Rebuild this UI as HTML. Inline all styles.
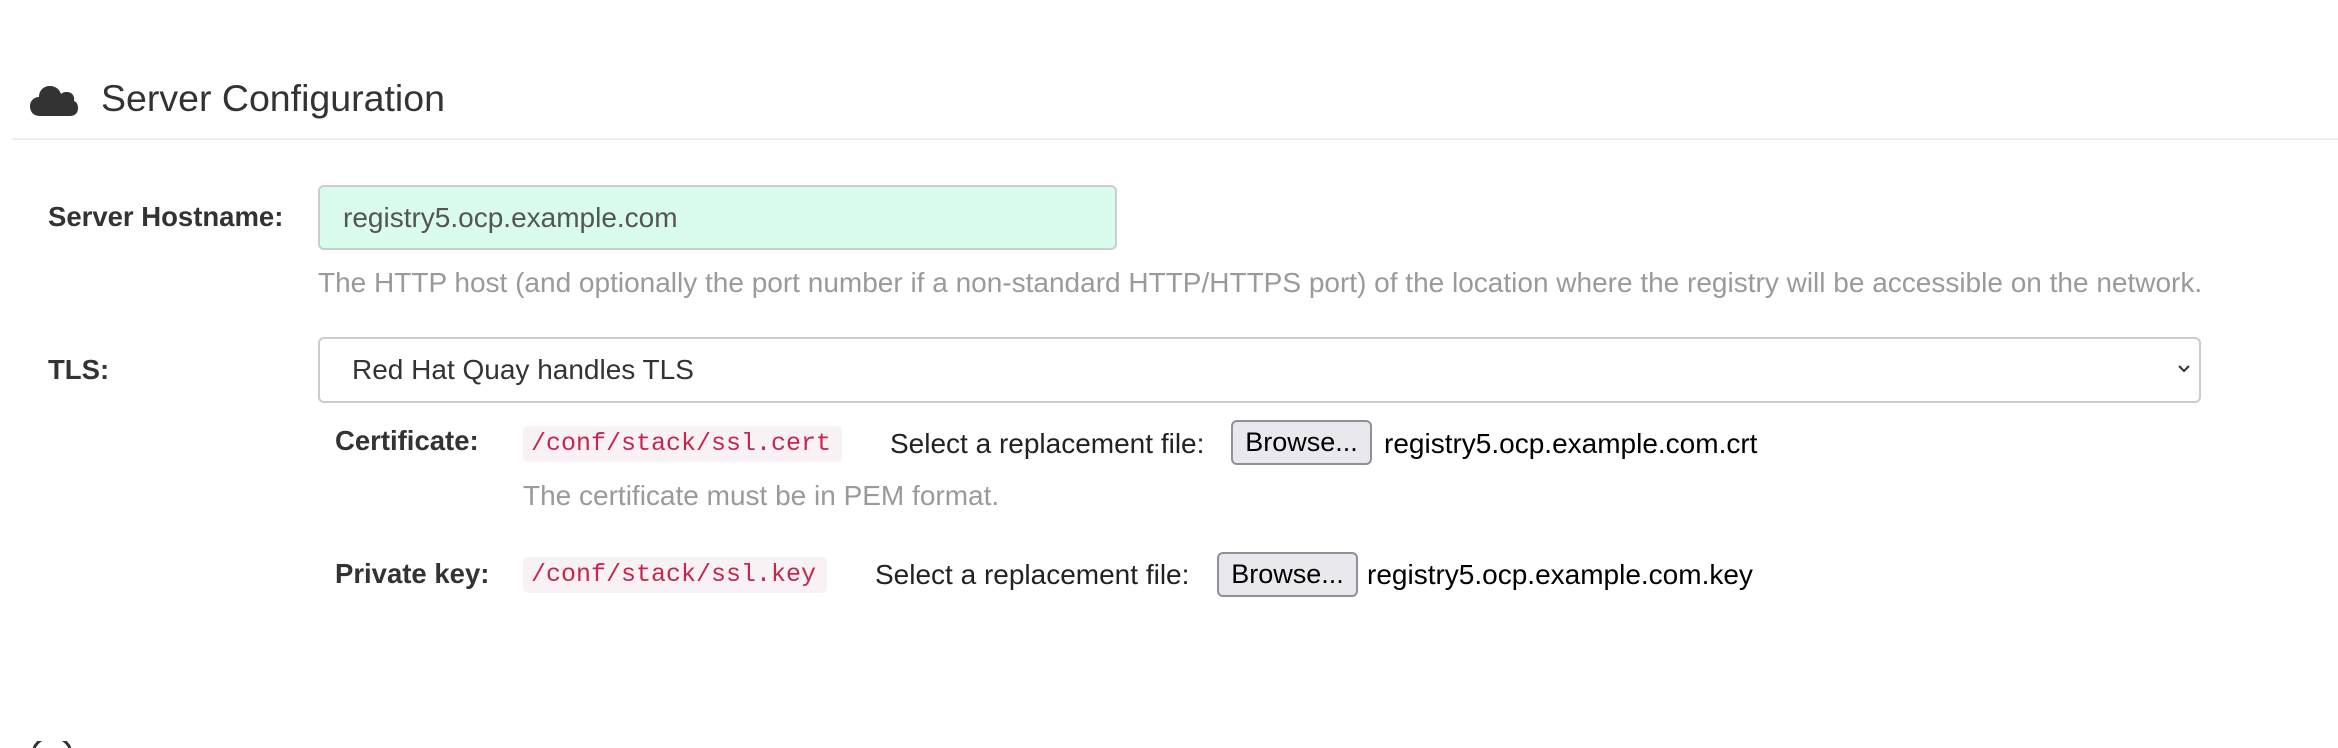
<!DOCTYPE html>
<html><head><meta charset="utf-8"><style>
html,body{margin:0;width:2338px;height:748px;overflow:hidden}
body{background:#fff;position:relative;font-family:"Liberation Sans",Arial,sans-serif;color:#333}
.a{position:absolute;white-space:nowrap}
.lbl{font-weight:bold;font-size:27.5px;color:#333}
.help{font-size:28px;color:#9a9a9a}
.code{font-family:"Liberation Mono",monospace;font-size:25px;color:#c7254e;background:#f9f2f4;border-radius:5px;height:36px;line-height:36px;padding:0 8px;box-sizing:border-box}
.btn{background:#e9e9ed;border:2px solid #8f8f9d;border-radius:6px;font-size:27px;color:#000;box-sizing:border-box;height:45px;line-height:41px;text-align:center}
.t{font-size:28px;color:#222}
</style></head><body>
<svg class="a" style="left:30px;top:84px" width="48" height="32" viewBox="0 0 48 32"><path d="M10 32 C2 32 0 26 0 22 C0 17 4 13 9 13 C9 6 14 2 20 2 C26 2 30 6 31 10 C33 8 35 8 37 8 C42 8 45 12 44 17 C47 18 48 21 48 24 C48 29 45 32 40 32 Z" fill="#333"/></svg>
<div class="a" style="left:101px;top:77px;font-size:37.5px;color:#333">Server Configuration</div>
<div class="a" style="left:12px;top:138px;width:2326px;height:2px;background:#eee"></div>

<div class="a lbl" style="left:48px;top:201px">Server Hostname:</div>
<div class="a" style="left:318px;top:185px;width:799px;height:65px;box-sizing:border-box;border:2px solid #ccc;border-radius:6px;background:#dafcec"></div>
<div class="a" style="left:343px;top:202px;font-size:28px;color:#555">registry5.ocp.example.com</div>
<div class="a help" style="left:318px;top:267px">The HTTP host (and optionally the port number if a non-standard HTTP/HTTPS port) of the location where the registry will be accessible on the network.</div>

<div class="a lbl" style="left:48px;top:354px">TLS:</div>
<div class="a" style="left:318px;top:337px;width:1883px;height:66px;box-sizing:border-box;border:2px solid #ccc;border-radius:6px;background:#fff"></div>
<div class="a" style="left:352px;top:354px;font-size:28px;color:#333">Red Hat Quay handles TLS</div>
<svg class="a" style="left:2177px;top:364px" width="14" height="10" viewBox="0 0 14 10"><path d="M2 2 L7 7 L12 2" fill="none" stroke="#333" stroke-width="2"/></svg>

<div class="a lbl" style="left:335px;top:425px">Certificate:</div>
<div class="a code" style="left:523px;top:426px;width:319px">/conf/stack/ssl.cert</div>
<div class="a t" style="left:890px;top:428px">Select a replacement file:</div>
<div class="a btn" style="left:1231px;top:420px;width:141px">Browse...</div>
<div class="a t" style="left:1384px;top:428px;color:#000">registry5.ocp.example.com.crt</div>
<div class="a help" style="left:523px;top:480px">The certificate must be in PEM format.</div>

<div class="a lbl" style="left:335px;top:558px">Private key:</div>
<div class="a code" style="left:523px;top:557px;width:304px">/conf/stack/ssl.key</div>
<div class="a t" style="left:875px;top:559px">Select a replacement file:</div>
<div class="a btn" style="left:1217px;top:552px;width:141px">Browse...</div>
<div class="a t" style="left:1367px;top:559px;color:#000">registry5.ocp.example.com.key</div>

<svg class="a" style="left:30px;top:741px" width="44" height="7" viewBox="0 0 44 7"><path d="M4 7 A20 20 0 0 1 40 7" fill="none" stroke="#333" stroke-width="3"/></svg>
</body></html>
